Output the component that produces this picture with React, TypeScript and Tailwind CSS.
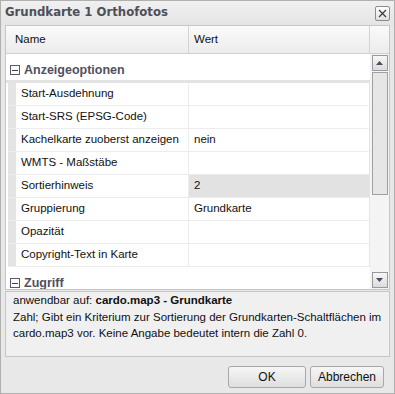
import React from "react";

interface RowProps {
  name: string;
  value?: string;
  selected?: boolean;
}

const Row: React.FC<RowProps> = ({ name, value, selected }) => {
  return (
    <div className="flex h-[23px] border-b border-[#ececec] ml-[2px]">
      <div className="w-[8px] bg-[#e4e4e4] shrink-0" />
      <div className="w-[173px] pl-[5px] flex items-center border-r border-[#ececec] text-[#111] whitespace-nowrap">{name}</div>
      <div className={`flex-1 pl-[5px] flex items-center text-[#111] ${selected ? "bg-[#e2e2e2]" : ""}`}>{value}</div>
    </div>
  );
};

const GroupRow: React.FC<{ label: string }> = ({ label }) => (
  <div className="flex items-center h-[29px] pt-[6px] pl-[4px] gap-[4px] border-b-[3px] border-[#e3e3e3] shrink-0">
    <span className="w-[10px] h-[10px] border border-[#5a5a6a] flex items-center justify-center bg-white">
      <span className="w-[6px] h-px bg-[#3c3c4c]" />
    </span>
    <span className="font-bold text-[12.5px] text-[#505060]">{label}</span>
  </div>
);

const ScrollBtn: React.FC<{ up?: boolean }> = ({ up }) => (
  <div className="w-[16px] h-[16px] border border-[#9a9a9a] bg-gradient-to-b from-[#f7f7f7] to-[#dcdcdc] flex items-center justify-center shrink-0">
    <svg width="7" height="4" viewBox="0 0 7 4">
      <path d={up ? "M0 4 L3.5 0 L7 4 Z" : "M0 0 L3.5 4 L7 0 Z"} fill="#4a4a62" />
    </svg>
  </div>
);

export default function App() {
  return (
    <div className="w-[395px] h-[394px] bg-[#e8e8e8] border border-[#b0b0b0] flex flex-col text-[11.5px] font-['Liberation_Sans',Arial,sans-serif]">
      <div className="h-[24px] flex items-center justify-between pl-[4px] pr-[4px] bg-gradient-to-b from-[#f0f0f0] to-[#e4e4e4] shrink-0">
        <span className="font-bold text-[11.7px] text-[#4f4f59] font-['DejaVu_Sans',sans-serif]">Grundkarte 1 Orthofotos</span>
        <span className="w-[15px] h-[15px] border border-[#8c8c8c] rounded-[2px] bg-gradient-to-b from-white to-[#e0e0e0] flex items-center justify-center">
          <svg width="9" height="9" viewBox="0 0 9 9">
            <path d="M1 1 L8 8 M8 1 L1 8" stroke="#3a3a3a" strokeWidth="1.2" />
          </svg>
        </span>
      </div>

      <div className="mx-[4px] h-[265px] border border-[#c6c6c6] bg-white flex flex-col shrink-0">
        <div className="h-[28px] flex border-b border-[#d0d0d0] bg-gradient-to-b from-[#fafafa] to-[#ececec] text-[#111] shrink-0">
          <div className="w-[183px] pl-[9px] flex items-center border-r border-[#d4d4d4]">Name</div>
          <div className="w-[181px] pl-[5px] flex items-center border-r border-[#d4d4d4]">Wert</div>
          <div className="flex-1" />
        </div>
        <div className="flex flex-1 overflow-hidden">
          <div className="w-[364px] flex flex-col overflow-hidden">
            <GroupRow label="Anzeigeoptionen" />
            <div className="border-r border-[#e4e4e4] shrink-0">
              <Row name="Start-Ausdehnung" />
              <Row name="Start-SRS (EPSG-Code)" />
              <Row name="Kachelkarte zuoberst anzeigen" value="nein" />
              <Row name="WMTS - Maßstäbe" />
              <Row name="Sortierhinweis" value="2" selected />
              <Row name="Gruppierung" value="Grundkarte" />
              <Row name="Opazität" />
              <Row name="Copyright-Text in Karte" />
            </div>
            <GroupRow label="Zugriff" />
          </div>
          <div className="flex-1 bg-[#f4f4f4] flex flex-col items-center pt-[1px] pb-[1px]">
            <ScrollBtn up />
            <div className="w-[16px] h-[123px] mt-[1px] border border-[#a0a0a0] bg-[#e6e6e6] shrink-0" />
            <div className="flex-1" />
            <ScrollBtn />
          </div>
        </div>
      </div>

      <div className="mx-[4px] mt-[1px] h-[66px] border border-[#c6c6c6] bg-[#f0f0f0] px-[7px] pt-0 text-[#111] leading-[16.5px] shrink-0">
        <div>
          anwendbar auf: <span className="font-bold">cardo.map3 - Grundkarte</span>
        </div>
        <div>Zahl; Gibt ein Kriterium zur Sortierung der Grundkarten-Schaltflächen im cardo.map3 vor. Keine Angabe bedeutet intern die Zahl 0.</div>
      </div>

      <div className="flex justify-end gap-[4px] pr-[10px] pt-[9px]">
        <button className="w-[78px] h-[22px] border border-[#a8a8a8] rounded-[3px] bg-gradient-to-b from-[#f6f6f6] to-[#dedede] text-[#111] text-[12px]">OK</button>
        <button className="w-[74px] h-[22px] border border-[#a8a8a8] rounded-[3px] bg-gradient-to-b from-[#f6f6f6] to-[#dedede] text-[#111] text-[12px]">Abbrechen</button>
      </div>
    </div>
  );
}
